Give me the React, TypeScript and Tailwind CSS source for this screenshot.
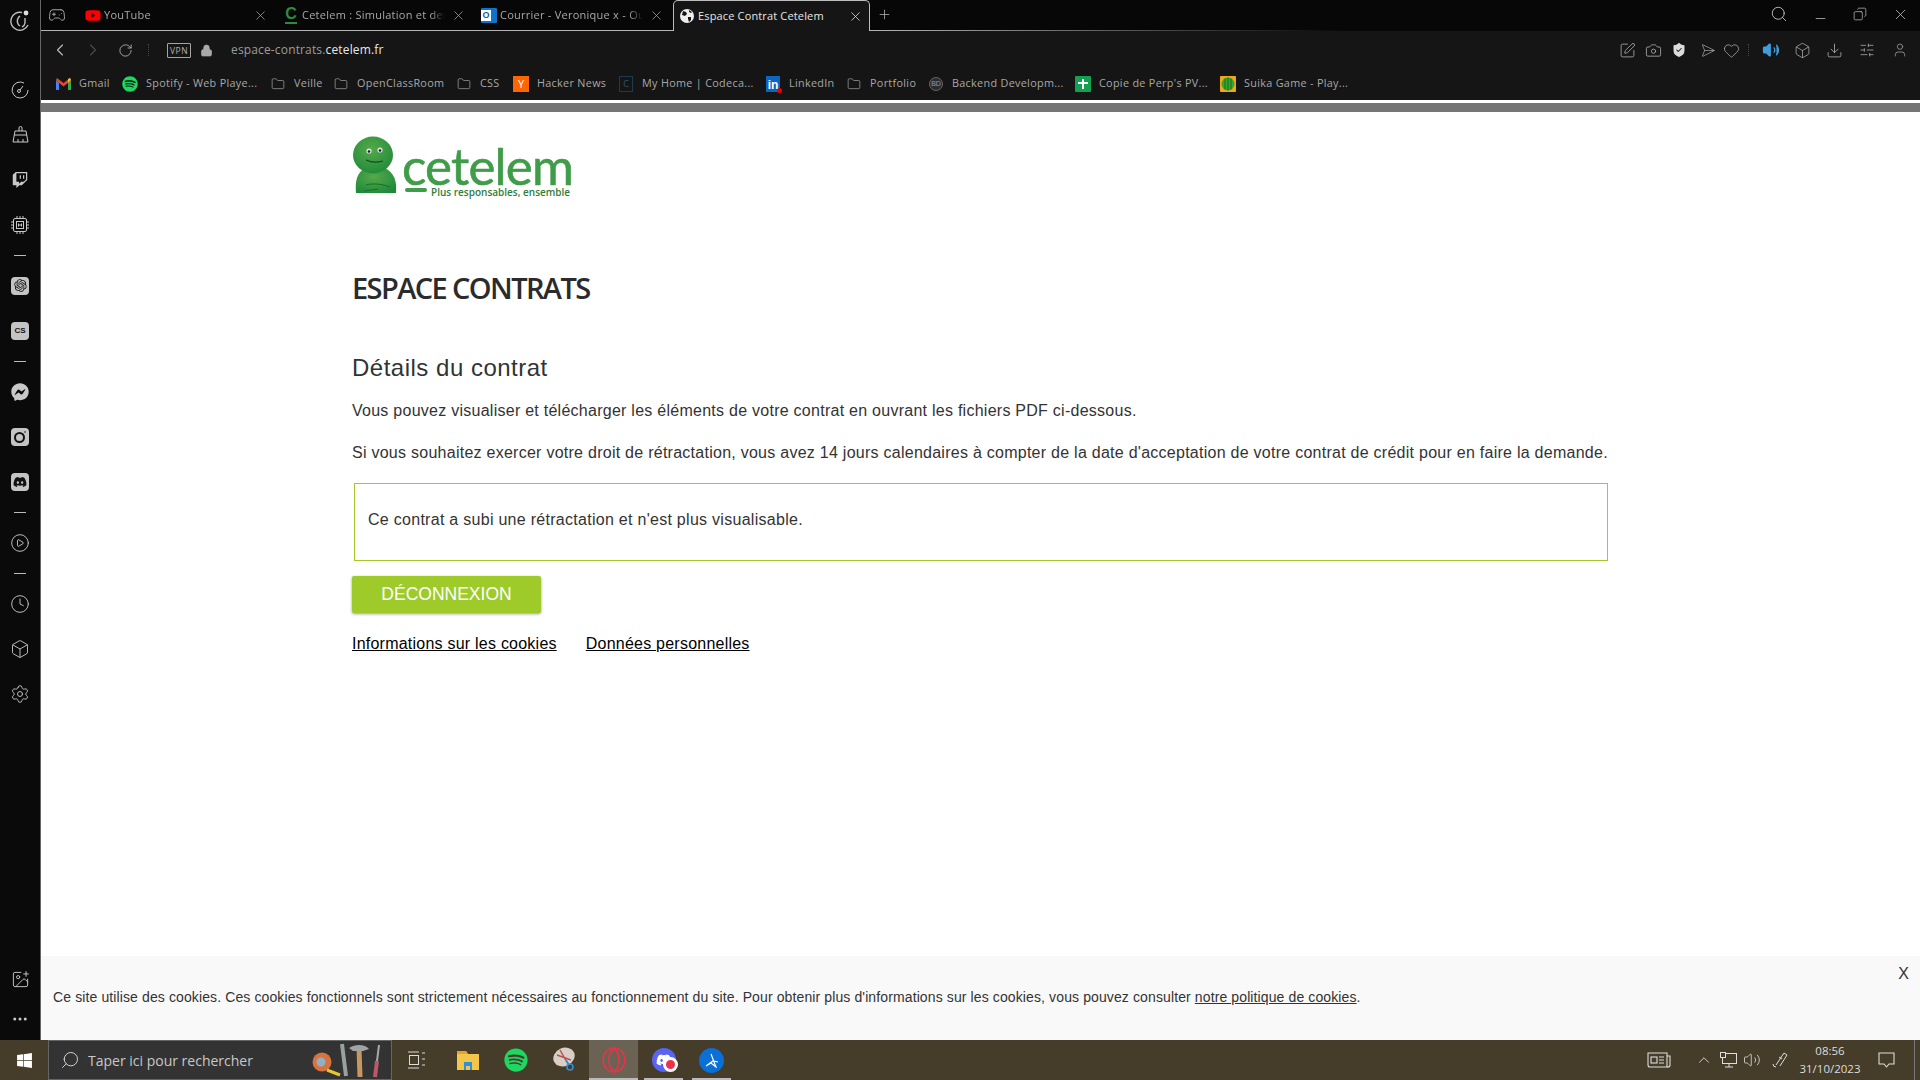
import React from "react";
import {
  ChevronLeft, ChevronRight, RotateCw, Lock, Search, Minus, X, Plus, Gamepad2, Camera, Send, Heart, Box, Download,
  SlidersHorizontal, User, Folder, CirclePlay, Clock, Settings, ImagePlus, Ellipsis,
  ChevronUp, Volume2, Copy, SquarePen, ShieldCheck,
} from "lucide-react";
import { FaSpotify, FaDiscord, FaFacebookMessenger, FaTwitch, FaWindows, FaYoutube } from "react-icons/fa";
import { RiOpenaiFill } from "react-icons/ri";

const ui = "font-['Open_Sans','Noto_Sans',sans-serif]";
const arial = "font-['Liberation_Sans',Arial,sans-serif]";

function SideItem({ children }: { children: React.ReactNode }) {
  return <div className="h-[45px] flex items-center justify-center text-[#c8c8c8]">{children}</div>;
}
function Dash() {
  return <div className="h-4 flex items-center justify-center"><div className="w-3 h-px bg-[#bbb]" /></div>;
}
function Tile({ children }: { children: React.ReactNode }) {
  return <div className="w-[18px] h-[18px] rounded-[4px] bg-[#c4c4c4] text-[#111] flex items-center justify-center">{children}</div>;
}

function Sidebar() {
  return (
    <aside className="w-[41px] shrink-0 h-full bg-[#0a0a0a] border-r border-[#666] flex flex-col">
      <div className="h-[40px] flex items-center justify-center">
        <svg width="24" height="24" viewBox="0 0 24 24" fill="none" stroke="#bdbdbd" strokeWidth="1.4">
          <path d="M14 4.5A9 9 0 1 0 20 17" />
          <path d="M12 8a6 6 0 0 0 0 10" />
          <path d="M17 10v5a5 5 0 0 1-3 4" />
          <circle cx="18" cy="5" r="2.4" fill="#ddd" stroke="none" />
        </svg>
      </div>
      <div className="mt-[27px]">
        <SideItem>
          <svg width="18" height="18" viewBox="0 0 18 18" fill="none" stroke="#c8c8c8" strokeWidth="1">
            <path d="M13 2A8 8 0 1 0 9 17a8 8 0 0 0 8-8" />
            <circle cx="8" cy="10" r="1.5" /><path d="M9 9l3-4" /><path d="M16 3v.1M17 5.500v.1" strokeWidth="1.2" />
          </svg>
        </SideItem>
        <SideItem>
          <svg width="17" height="17" viewBox="0 0 17 17" fill="none" stroke="#c8c8c8" strokeWidth="1">
            <path d="M7 5V2a1.500 1.500 0 0 1 3 0v3" /><path d="M3 5h11l2 11H1z" /><path d="M2 9h13M6 16v-3M11 16v-3" />
          </svg>
        </SideItem>
        <SideItem><FaTwitch size={16} /></SideItem>
        <SideItem>
          <svg width="18" height="18" viewBox="0 0 18 18" fill="none" stroke="#c8c8c8" strokeWidth="1">
            <rect x="2.500" y="2.500" width="13" height="13" rx="1.500" /><rect x="5.500" y="5.500" width="7" height="7" />
            <path d="M7.500 7.500v3M10.500 7.500v3M7.500 9h3M6 0v2.500M9 0v2.500M12 0v2.500M6 15.500V18M9 15.500V18M12 15.500V18M0 6h2.500M0 9h2.500M0 12h2.500M15.500 6H18M15.500 9H18M15.500 12H18" />
          </svg>
        </SideItem>
        <Dash />
        <SideItem><Tile><RiOpenaiFill size={15} /></Tile></SideItem>
        <SideItem><Tile><span className={`${arial} text-[8px] font-bold`}>CS</span></Tile></SideItem>
        <Dash />
        <SideItem><FaFacebookMessenger size={18} /></SideItem>
        <SideItem>
          <Tile>
            <svg width="14" height="14" viewBox="0 0 14 14" fill="none" stroke="#111" strokeWidth="2"><circle cx="6.500" cy="7.500" r="4.500" /><circle cx="12" cy="2" r="0.800" fill="#111" strokeWidth="0" /></svg>
          </Tile>
        </SideItem>
        <SideItem><Tile><FaDiscord size={14} /></Tile></SideItem>
        <Dash />
        <SideItem><CirclePlay size={20} strokeWidth={1.1} /></SideItem>
        <Dash />
        <SideItem><Clock size={20} strokeWidth={1.1} /></SideItem>
        <SideItem><Box size={20} strokeWidth={1.1} /></SideItem>
        <SideItem><Settings size={20} strokeWidth={1.1} /></SideItem>
      </div>
      <div className="mt-auto pb-px">
        <div className="h-10 flex items-center justify-center text-[#c8c8c8]"><ImagePlus size={19} strokeWidth={1.2} /></div>
        <div className="h-10 flex items-center justify-center text-[#c8c8c8]"><Ellipsis size={18} strokeWidth={2} /></div>
      </div>
    </aside>
  );
}

function Tab({ icon, label, width }: { icon: React.ReactNode; label: string; width: string }) {
  return (
    <div className={`${width} h-full border-b border-[#b5b5b5] flex items-center`}>
      <span className="w-[16px] h-[16px] flex items-center justify-center shrink-0">{icon}</span>
      <span className={`${ui} ml-[3px] w-[143px] overflow-hidden whitespace-nowrap text-[11px] text-[#a9a9a9] tracking-[0.25px] [mask-image:linear-gradient(to_right,#000_90%,transparent)]`}>{label}</span>
      <X size={15} strokeWidth={1.2} className="ml-[6px] text-[#a5a5a5] shrink-0" />
    </div>
  );
}

function TabBar() {
  return (
    <div className="h-[31px] shrink-0 flex items-stretch bg-[#070707]">
      <div className="w-[44px] border-b border-[#b5b5b5] flex items-center pl-[7px] text-[#a8a8a8]"><Gamepad2 size={18} strokeWidth={1.3} /></div>
      <Tab width="w-[198px]" label="YouTube" icon={<FaYoutube size={17} className="text-[#f00]" />} />
      <Tab width="w-[198px]" label="Cetelem : Simulation et demande" icon={
        <span className={`${arial} text-[16px] font-bold text-[#2e8b3d] leading-none border-b-2 border-[#2e8b3d]`}>C</span>} />
      <Tab width="w-[192px]" label="Courrier - Veronique x - Outlook" icon={
        <span className="w-[16px] h-[15px] bg-[#0f74c7] rounded-[1px] flex items-center">
          <span className={`${arial} w-[10px] h-[11px] bg-[#fff] text-[#0a5da8] text-[9px] font-bold leading-[11px] text-center`}>O</span>
        </span>} />
      <div className="w-[197px] h-full border-t border-x border-[#bdbdbd] rounded-t-[5px] bg-[#151515] flex items-center pl-[6px]">
        <svg width="14" height="14" viewBox="0 0 14 14" className="shrink-0">
          <circle cx="7" cy="7" r="7" fill="#eee" />
          <path d="M3 2l3 1 1 2-2 2-3-1zM8 8l3 0 0 3-2 2-1-3zM9 1l3 2-1 1-2-1z" fill="#151515" />
        </svg>
        <span className={`${ui} ml-[4px] w-[150px] text-[11px] text-[#e6e6e6] tracking-[0.15px] whitespace-nowrap`}>Espace Contrat Cetelem</span>
        <X size={15} strokeWidth={1.3} className="text-[#ddd] shrink-0" />
      </div>
      <div className="flex-1 flex flex-col justify-between">
        <div className="flex items-center pl-[7px] h-[28px] text-[#bbb]">
          <Plus size={15} strokeWidth={1.2} />
          <div className="ml-auto flex items-center text-[#c4c4c4]">
            <Search size={18} strokeWidth={1.2} className="mr-[25px]" />
            <Minus size={15} strokeWidth={1.2} className="mr-[25px] mt-[8px]" />
            <Copy size={14} strokeWidth={1.2} className="mr-[25px] -scale-x-100" />
            <X size={17} strokeWidth={1.1} className="mr-[11px]" />
          </div>
        </div>
        <div className="h-px bg-gradient-to-r from-[#b5b5b5] to-transparent to-[45%]" />
      </div>
    </div>
  );
}

function ToolIcon({ children, cls }: { children: React.ReactNode; cls: string }) {
  return <span className={`${cls} w-[18px] flex justify-center text-[#b8b8b8]`}>{children}</span>;
}

function AddressBar() {
  return (
    <div className="h-[38px] flex items-center pl-[9px]">
      <ChevronLeft size={20} strokeWidth={1.3} className="text-[#bdbdbd]" />
      <ChevronRight size={20} strokeWidth={1.3} className="ml-[13px] text-[#4a4a4a]" />
      <RotateCw size={15} strokeWidth={1.4} className="ml-[15px] text-[#b4b4b4]" />
      <span className="ml-[15px] h-[12px] border-l border-dotted border-[#444]" />
      <span className={`${ui} ml-[18px] w-[24px] h-[15px] border border-[#a5a5a5] rounded-[1px] text-[#b0b0b0] text-[8.5px] leading-[13px] text-center tracking-[0.5px]`}>VPN</span>
      <Lock size={13} fill="#a9a9a9" strokeWidth={1.6} className="ml-[9px] text-[#a9a9a9]" />
      <span className={`${ui} ml-[18px] text-[12px] tracking-[0.15px] text-[#9c9c9c] whitespace-nowrap`}>
        espace-contrats.<span className="text-[#e8e8e8]">cetelem.fr</span>
      </span>
      <div className="ml-auto flex items-center pr-[11px]">
        <ToolIcon cls=""><SquarePen size={17} strokeWidth={1.1} /></ToolIcon>
        <ToolIcon cls="ml-[8px]"><Camera size={17} strokeWidth={1.1} /></ToolIcon>
        <ToolIcon cls="ml-[8px]"><ShieldCheck size={18} fill="#dcdcdc" stroke="#151515" strokeWidth={1.4} /></ToolIcon>
        <ToolIcon cls="ml-[8px]"><Send size={15} strokeWidth={1} className="rotate-45" /></ToolIcon>
        <ToolIcon cls="ml-[8px]"><Heart size={17} strokeWidth={1} /></ToolIcon>
        <span className="ml-[8px] h-[12px] border-l border-dotted border-[#444]" />
        <ToolIcon cls="ml-[13px]"><Volume2 size={18} strokeWidth={1.6} className="text-[#3f9fdc]" fill="#3f9fdc" /></ToolIcon>
        <ToolIcon cls="ml-[13px]"><Box size={17} strokeWidth={1} /></ToolIcon>
        <ToolIcon cls="ml-[14px]"><Download size={17} strokeWidth={1.1} /></ToolIcon>
        <ToolIcon cls="ml-[15px]"><SlidersHorizontal size={16} strokeWidth={1.1} /></ToolIcon>
        <ToolIcon cls="ml-[15px]"><User size={16} strokeWidth={1} /></ToolIcon>
      </div>
    </div>
  );
}

function Mark({ label, icon, cls }: { label: string; icon: React.ReactNode; cls: string }) {
  return (
    <div className={`${cls} flex items-center shrink-0`}>
      <span className="w-[16px] flex justify-center shrink-0">{icon}</span>
      <span className={`${ui} ml-[8px] text-[10.8px] tracking-[0.32px] text-[#a8a8a8] whitespace-nowrap`}>{label}</span>
    </div>
  );
}
const folder = <Folder size={14} strokeWidth={1.1} className="text-[#b5b5b5]" />;

function Bookmarks() {
  return (
    <div className="h-[29px] flex items-center pl-[14px]">
      <Mark cls="w-[67px]" label="Gmail" icon={
        <svg width="15" height="12" viewBox="0 0 15 12">
          <path d="M0 2v10h3V5z" fill="#4285f4" /><path d="M12 5v7h3V2z" fill="#34a853" />
          <path d="M0 2l3 3 4.500 3.400L12 5l3-3-1-2-6.500 5L1 0z" fill="#ea4335" />
          <path d="M12 1v4l3-3-1-2z" fill="#fbbc04" />
        </svg>} />
      <Mark cls="w-[148px]" label="Spotify - Web Playe..." icon={<FaSpotify size={16} className="text-[#1ed760]" />} />
      <Mark cls="w-[63px]" label="Veille" icon={folder} />
      <Mark cls="w-[123px]" label="OpenClassRoom" icon={folder} />
      <Mark cls="w-[57px]" label="CSS" icon={folder} />
      <Mark cls="w-[105px]" label="Hacker News" icon={
        <span className={`${ui} w-[16px] h-[16px] bg-[#f60] text-white text-[11px] leading-[16px] text-center`}>Y</span>} />
      <Mark cls="w-[147px]" label="My Home | Codeca..." icon={
        <span className={`${ui} w-[14px] h-[16px] border border-[#1f3a52] text-[#2c5676] text-[9px] leading-[14px] text-center`}>C</span>} />
      <Mark cls="w-[81px]" label="LinkedIn" icon={
        <span className={`${arial} relative w-[14px] h-[16px] bg-[#0a66c2] text-white text-[12px] font-bold leading-[18px] text-center`}>in
          <span className="absolute right-[-2px] bottom-[-1px] w-[5px] h-[5px] rounded-full bg-[#e00]" /></span>} />
      <Mark cls="w-[82px]" label="Portfolio" icon={folder} />
      <Mark cls="w-[147px]" label="Backend Developm..." icon={
        <span className={`${arial} w-[14px] h-[14px] rounded-full border border-[#666] bg-[#2b2b33] text-[#999] text-[7px] leading-[12px] text-center`}>BD</span>} />
      <Mark cls="w-[145px]" label="Copie de Perp's PV..." icon={
        <svg width="16" height="16" viewBox="0 0 16 16"><rect width="16" height="16" rx="1" fill="#12a150" /><path d="M7 3h2v3h4v2H9v5H7V8H3V6h4z" fill="#fff" /></svg>} />
      <Mark cls="w-[130px]" label="Suika Game - Play..." icon={
        <svg width="16" height="16" viewBox="0 0 16 16"><rect width="16" height="16" rx="1" fill="#f0a818" /><circle cx="8" cy="8" r="6.500" fill="#3aa52e" /><path d="M5 2.500v11M8 1.500v13M11 2.500v11" stroke="#1c6b1c" strokeWidth="1" /></svg>} />
    </div>
  );
}

function Logo() {
  return (
    <div className="relative h-[62px] w-[222px]">
      <svg width="46" height="60" viewBox="0 0 46 60" className="absolute left-0 top-0">
        <defs>
          <radialGradient id="g" cx="45%" cy="35%" r="70%"><stop offset="0%" stopColor="#56a94a" /><stop offset="100%" stopColor="#1f8a3a" /></radialGradient>
        </defs>
        <path d="M4 58c-1-13 1-20 9-25h20c9 5 12 12 11 25z" fill="url(#g)" />
        <path d="M14 50c7-2 16-1 24 2M12 56l14-2" stroke="#176e2c" strokeWidth="1" fill="none" />
        <ellipse cx="21" cy="20" rx="20" ry="18.500" fill="url(#g)" />
        <circle cx="17" cy="16" r="2.600" fill="#dfe8d8" /><circle cx="17" cy="16.500" r="1.300" fill="#123" />
        <circle cx="28" cy="15" r="2.600" fill="#dfe8d8" /><circle cx="28" cy="15.500" r="1.300" fill="#123" />
        <path d="M14 25c5 2.500 12 2.500 17 1" stroke="#134d20" strokeWidth="1.300" fill="none" />
      </svg>
      <span className="absolute left-[50px] top-[11px] font-['Lato',sans-serif] text-[51px] leading-[40px] text-[#3f9c49] tracking-[-0.8px] [-webkit-text-stroke:0.6px_#3f9c49]">cetelem</span>
      <span className="absolute left-[53px] top-[53px] w-[22px] h-[4px] rounded-full bg-[#3f9c49]" />
      <span className="absolute left-[79px] top-[51px] font-['Open_Sans',sans-serif] font-semibold text-[10px] leading-[12px] text-[#2f7d3b] whitespace-nowrap">Plus responsables, ensemble</span>
    </div>
  );
}

function Page() {
  return (
    <div className={`${arial} flex-1 bg-white flex flex-col min-h-0`}>
      <div className="pl-[311px] pt-[23px]">
        <Logo />
        <h1 className={`${ui} mt-[71px] font-semibold text-[29px] leading-[40px] tracking-[-1.6px] text-[#2b2b2b]`}>ESPACE CONTRATS</h1>
        <h2 className="mt-[46px] text-[24px] leading-[28px] tracking-[0.5px] text-[#333]">Détails du contrat</h2>
        <p className="mt-[18px] text-[16px] leading-[22px] tracking-[0.26px] text-[#333]">Vous pouvez visualiser et télécharger les éléments de votre contrat en ouvrant les fichiers PDF ci-dessous.</p>
        <p className="mt-[20px] text-[16px] leading-[22px] tracking-[0.26px] text-[#333] whitespace-nowrap">Si vous souhaitez exercer votre droit de rétractation, vous avez 14 jours calendaires à compter de la date d'acceptation de votre contrat de crédit pour en faire la demande.</p>
        <div className="mt-[19px] ml-[2px] w-[1254px] h-[78px] border border-[#a3c92c] pl-[13px] pt-[25px] text-[16px] leading-[22px] tracking-[0.28px] text-[#333]">Ce contrat a subi une rétractation et n'est plus visualisable.</div>
        <button className="mt-[15px] block w-[189px] h-[37px] rounded-[2px] bg-[#9ecb2a] text-white text-[17.5px] shadow-[0_1px_3px_rgba(0,0,0,0.4)]">DÉCONNEXION</button>
        <div className="mt-[20px] flex gap-[29px] text-[16px] leading-[22px] tracking-[0.23px] text-black underline">
          <span>Informations sur les cookies</span>
          <span>Données personnelles</span>
        </div>
      </div>
      <div className="mt-auto h-[84px] bg-[#f9f9f9] flex pl-[12px] text-[#333] text-[14px] tracking-[0.115px]">
        <p className="mt-[32px] leading-[18px]">Ce site utilise des cookies. Ces cookies fonctionnels sont strictement nécessaires au fonctionnement du site. Pour obtenir plus d'informations sur les cookies, vous pouvez consulter <span className="underline">notre politique de cookies</span>.</p>
        <span className="ml-auto mr-[11px] mt-[9px] text-[16px] leading-[18px]">X</span>
      </div>
    </div>
  );
}

function TaskSlot({ children, cls }: { children: React.ReactNode; cls: string }) {
  return <div className={`${cls} w-[49px] h-full relative flex items-center justify-center shrink-0`}>{children}</div>;
}

function Taskbar() {
  return (
    <footer className="h-10 shrink-0 bg-[#453c29] flex items-center">
      <div className="w-[48px] h-full flex items-center justify-center text-white"><FaWindows size={17} /></div>
      <div className="w-[344px] h-full border border-[#666] bg-[#333] flex items-center pl-[11px] relative">
        <Search size={20} strokeWidth={1.1} className="text-[#ddd] -scale-x-100" />
        <span className={`${ui} ml-[8px] text-[14px] text-[#c8c8c8]`}>Taper ici pour rechercher</span>
        <svg width="76" height="38" viewBox="0 0 76 38" className="absolute right-[6px] top-0">
          <circle cx="13" cy="21" r="9.500" fill="#d8733d" /><circle cx="12" cy="21" r="4.500" fill="#8fb0c8" />
          <path d="M18 29l13 5" stroke="#e8c532" strokeWidth="3" />
          <path d="M33 3l4 32" stroke="#9aa0a0" strokeWidth="4" />
          <path d="M50 7l1 29" stroke="#c89660" strokeWidth="5" />
          <path d="M40 7c6-4 16-4 20 1l-6 2H44z" fill="#a0a4a4" />
          <path d="M70 4l-2 16" stroke="#aaa" strokeWidth="2" /><path d="M68 20l-2 16" stroke="#b85a6a" strokeWidth="4" />
        </svg>
      </div>
      <div className="ml-[15px] w-[18px] text-[#ddd] flex justify-center">
        <svg width="17" height="18" viewBox="0 0 17 18" fill="none" stroke="#ddd" strokeWidth="1"><path d="M0 1h11M0 17h11" /><rect x="1.500" y="4.500" width="9" height="9" /><path d="M14 2h3M14 8h3M14 14h3" /></svg>
      </div>
      <TaskSlot cls="ml-[18px]">
        <svg width="24" height="24" viewBox="0 0 24 24"><path d="M1 3h9l2 3h11v16H1z" fill="#f3c54a" /><path d="M1 3h9l2 3H1z" fill="#e0a52e" /><path d="M8 14h8v8H8z" fill="#2f8fd8" /><path d="M10 18h4v4h-4z" fill="#f3c54a" /></svg>
      </TaskSlot>
      <TaskSlot cls="-ml-[1px]"><FaSpotify size={24} className="text-[#1ed760]" /></TaskSlot>
      <TaskSlot cls="">
        <svg width="26" height="26" viewBox="0 0 26 26"><ellipse cx="12" cy="10" rx="11" ry="9" fill="#d9cfc7" transform="rotate(-25 12 10)" /><path d="M5 8l14 5M8 3l8 14" stroke="#b5534a" strokeWidth="1.500" /><circle cx="18" cy="20" r="3" fill="none" stroke="#2f8fd8" strokeWidth="1.600" /><path d="M14 13l3 5" stroke="#2f8fd8" strokeWidth="1.600" /></svg>
      </TaskSlot>
      <TaskSlot cls="bg-[#6a6353]">
        <svg width="24" height="26" viewBox="0 0 24 26" fill="none" stroke="#e8334a" strokeWidth="1.600"><ellipse cx="12" cy="13" rx="11" ry="12" /><ellipse cx="12" cy="13" rx="5" ry="10.500" /></svg>
        <span className="absolute bottom-0 left-0 right-0 h-[2px] bg-[#bbb]" />
      </TaskSlot>
      <TaskSlot cls="ml-[1px]">
        <span className="w-[24px] h-[24px] rounded-full bg-[#5865f2] flex items-center justify-center text-white"><FaDiscord size={16} /></span>
        <span className="absolute left-[24px] top-[17px] w-[15px] h-[15px] rounded-full border-[3px] border-white bg-[#e8334a]" />
        <span className="absolute bottom-0 left-[5px] right-[5px] h-[2px] bg-[#bbb]" />
      </TaskSlot>
      <TaskSlot cls="-ml-[1px]">
        <span className="w-[25px] h-[25px] rounded-full bg-[#0a6fd6] flex items-center justify-center">
          <svg width="15" height="15" viewBox="0 0 15 15" fill="none" stroke="#fff" strokeWidth="1.200"><path d="M7 1l5 13-5-4-5 3 7-5 5 1" /></svg>
        </span>
        <span className="absolute bottom-0 left-[5px] right-[5px] h-[2px] bg-[#bbb]" />
      </TaskSlot>
      <div className="ml-auto flex items-center h-full text-[#ddd] pr-[1px]">
        <svg width="24" height="16" viewBox="0 0 24 16" fill="none" stroke="#ddd" strokeWidth="1.100" className="mr-[24px]">
          <path d="M1 1h19v14H3a2 2 0 0 1-2-2z" /><path d="M20 4h3v9a2 2 0 0 1-2 2h-1" />
          <rect x="4" y="5" width="6" height="6" /><path d="M12 5h5M12 8h5M12 11h5" />
        </svg>
        <ChevronUp size={18} strokeWidth={1.200} className="mr-[7px]" />
        <svg width="17" height="16" viewBox="0 0 17 16" fill="none" stroke="#ddd" strokeWidth="1" className="mr-[6px]">
          <rect x="2.500" y="1.500" width="14" height="10" /><path d="M9 12v3M5 15h8" /><rect x="0.500" y="0.500" width="5" height="5" fill="#453c29" />
        </svg>
        <Volume2 size={18} strokeWidth={1.100} className="mr-[10px]" />
        <svg width="18" height="18" viewBox="0 0 18 18" fill="none" stroke="#ddd" strokeWidth="1" className="mr-[10px]"><path d="M5 14L13 2l3 2-7 11M8 6l3 2M2 13a3 3 0 0 0 3 3" /></svg>
        <div className={`${ui} w-[62px] text-center text-[11.5px] leading-[18px] text-[#ddd]`}>
          <div>08:56</div><div>31/10/2023</div>
        </div>
        <svg width="17" height="16" viewBox="0 0 17 16" fill="none" stroke="#ddd" strokeWidth="1.100" className="ml-[17px] mr-[19px]"><path d="M1 1h15v11h-5l-2.500 3-2.500-3H1z" /></svg>
        <span className="w-px h-full bg-[#777]" />
        <span className="w-[4px]" />
      </div>
    </footer>
  );
}

export default function App() {
  return (
    <div className="w-[1920px] h-[1080px] overflow-hidden flex flex-col bg-[#0a0a0a]">
      <div className="h-[1040px] flex">
        <Sidebar />
        <main className="flex-1 min-w-0 flex flex-col">
          <TabBar />
          <div className="h-[72px] shrink-0 bg-[#151515] border-b-[3px] border-white">
            <AddressBar />
            <Bookmarks />
          </div>
          <div className="h-[9px] shrink-0 bg-[#757575]" />
          <Page />
        </main>
      </div>
      <Taskbar />
    </div>
  );
}
